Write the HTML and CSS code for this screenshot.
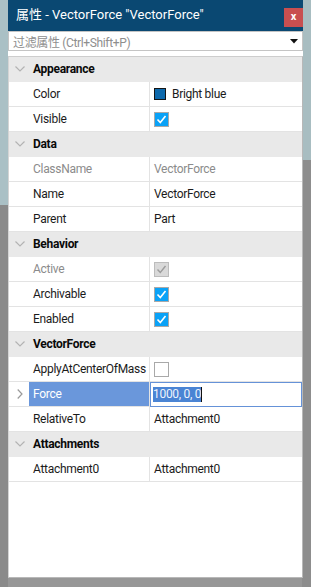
FILE: index.html
```html
<!DOCTYPE html>
<html>
<head>
<meta charset="utf-8">
<link rel="stylesheet" href="styles.css">
</head>
<body>
<div class="window">
  <div class="titlebar">
    <span class="title">属性 - VectorForce "VectorForce"</span>
    <span class="close">x</span>
  </div>
  <div class="filter">
    <span class="placeholder">过滤属性 (Ctrl+Shift+P)</span>
    <svg class="drop" width="8" height="5" viewBox="0 0 8 5"><path d="M0 0 H8 L4 4.5 Z" fill="#111"/></svg>
  </div>
  <div class="spacer"></div>
  <div class="grid">
    <div class="row head"><span class="exp"><svg width="10" height="6" viewBox="0 0 10 6"><path d="M0.5 0.5 L5 5 L9.5 0.5" fill="none" stroke="#b3b3b3" stroke-width="1.2"/></svg></span><span class="htext">Appearance</span></div>
    <div class="row"><div class="lab"><span class="exp"></span><span class="name">Color</span></div><div class="val"><span class="swatch"></span>Bright blue</div></div>
    <div class="row"><div class="lab"><span class="exp"></span><span class="name">Visible</span></div><div class="val"><span class="cb on"><svg width="13" height="13" viewBox="0 0 13 13"><path d="M2.5 6.5 L5.3 9.5 L10.5 3" fill="none" stroke="#fff" stroke-width="1.6"/></svg></span></div></div>

    <div class="row head"><span class="exp"><svg width="10" height="6" viewBox="0 0 10 6"><path d="M0.5 0.5 L5 5 L9.5 0.5" fill="none" stroke="#b3b3b3" stroke-width="1.2"/></svg></span><span class="htext">Data</span></div>
    <div class="row"><div class="lab"><span class="exp"></span><span class="name dis">ClassName</span></div><div class="val dis">VectorForce</div></div>
    <div class="row"><div class="lab"><span class="exp"></span><span class="name">Name</span></div><div class="val">VectorForce</div></div>
    <div class="row"><div class="lab"><span class="exp"></span><span class="name">Parent</span></div><div class="val">Part</div></div>

    <div class="row head"><span class="exp"><svg width="10" height="6" viewBox="0 0 10 6"><path d="M0.5 0.5 L5 5 L9.5 0.5" fill="none" stroke="#b3b3b3" stroke-width="1.2"/></svg></span><span class="htext">Behavior</span></div>
    <div class="row"><div class="lab"><span class="exp"></span><span class="name dis">Active</span></div><div class="val"><span class="cb disabled"><svg width="13" height="13" viewBox="0 0 13 13"><path d="M2.5 6.5 L5.3 9.5 L10.5 3" fill="none" stroke="#9c9c9c" stroke-width="1.4"/></svg></span></div></div>
    <div class="row"><div class="lab"><span class="exp"></span><span class="name">Archivable</span></div><div class="val"><span class="cb on"><svg width="13" height="13" viewBox="0 0 13 13"><path d="M2.5 6.5 L5.3 9.5 L10.5 3" fill="none" stroke="#fff" stroke-width="1.6"/></svg></span></div></div>
    <div class="row"><div class="lab"><span class="exp"></span><span class="name">Enabled</span></div><div class="val"><span class="cb on"><svg width="13" height="13" viewBox="0 0 13 13"><path d="M2.5 6.5 L5.3 9.5 L10.5 3" fill="none" stroke="#fff" stroke-width="1.6"/></svg></span></div></div>

    <div class="row head"><span class="exp"><svg width="10" height="6" viewBox="0 0 10 6"><path d="M0.5 0.5 L5 5 L9.5 0.5" fill="none" stroke="#b3b3b3" stroke-width="1.2"/></svg></span><span class="htext">VectorForce</span></div>
    <div class="row"><div class="lab"><span class="exp"></span><span class="name">ApplyAtCenterOfMass</span></div><div class="val"><span class="cb off"></span></div></div>
    <div class="row"><div class="lab"><span class="exp"><svg width="6" height="10" viewBox="0 0 6 10"><path d="M0.7 0.5 L5 5 L0.7 9.5" fill="none" stroke="#9a9a9a" stroke-width="1.2"/></svg></span><span class="name sel">Force</span></div><div class="val edit"><span class="seltext">1000, 0, 0</span><span class="caret"></span></div></div>
    <div class="row"><div class="lab"><span class="exp"></span><span class="name">RelativeTo</span></div><div class="val">Attachment0</div></div>

    <div class="row head"><span class="exp"><svg width="10" height="6" viewBox="0 0 10 6"><path d="M0.5 0.5 L5 5 L9.5 0.5" fill="none" stroke="#b3b3b3" stroke-width="1.2"/></svg></span><span class="htext">Attachments</span></div>
    <div class="row"><div class="lab"><span class="exp"></span><span class="name">Attachment0</span></div><div class="val">Attachment0</div></div>
  </div>
</div>
</body>
</html>
```

FILE: styles.css
```css
html, body {
  margin: 0;
  padding: 0;
}
body {
  width: 311px;
  height: 587px;
  overflow: hidden;
  font-family: Roboto, "Noto Sans CJK SC", sans-serif;
  font-size: 12px;
  letter-spacing: -0.3px;
  color: #1b1b1b;
  background:
    linear-gradient(#aac0c5 0, #aac0c5 205px, #8a8a8a 205px) left top / 8px 100% no-repeat,
    linear-gradient(#a8bdc1 0, #a8bdc1 160px, #8d8d8d 160px) right top / 9px 100% no-repeat,
    #979797;
}
.window {
  margin-left: 8px;
  width: 295px;
  height: 578px;
  background: #fff;
  display: flex;
  flex-direction: column;
}
.titlebar {
  height: 31px;
  flex: none;
  background: #0a4872;
  display: flex;
  justify-content: space-between;
  align-items: flex-start;
}
.title {
  color: #fff;
  font-size: 13px;
  letter-spacing: 0;
  padding-left: 8px;
  line-height: 30px;
}
.close {
  margin-top: 8px;
  width: 19px;
  height: 19px;
  background: #c84f50;
  color: #fff;
  font-weight: bold;
  font-size: 11px;
  line-height: 18px;
  text-align: center;
  letter-spacing: 0;
}
.filter {
  flex: none;
  height: 20px;
  box-sizing: border-box;
  border: 1px solid #c4c4c4;
  display: flex;
  align-items: center;
  justify-content: space-between;
  padding: 0 4px 0 4px;
}
.placeholder {
  color: #8e8e8e;
  font-size: 12px;
  letter-spacing: -0.35px;
}
.spacer {
  flex: none;
  height: 5px;
}
.grid {
  flex: 1;
  border-top: 1px solid #cdcdcd;
  border-left: 1px solid #d4d4d4;
  border-right: 1px solid #b8b8b8;
  border-bottom: 1px solid #b8b8b8;
  display: flex;
  flex-direction: column;
}
.row {
  height: 25px;
  box-sizing: border-box;
  border-bottom: 1px solid #e3e3e3;
  display: flex;
  align-items: stretch;
  flex: none;
}
.row.head {
  background: #e9e9e9;
  border-bottom-color: #e9e9e9;
  align-items: center;
}
.exp {
  width: 20px;
  flex: none;
  display: flex;
  align-items: center;
  justify-content: center;
  padding-left: 1px;
  box-sizing: border-box;
}
.htext {
  font-weight: bold;
  color: #0a0a0a;
  padding-left: 4px;
  line-height: 24px;
}
.lab {
  width: 141px;
  flex: none;
  box-sizing: border-box;
  border-right: 1px solid #e3e3e3;
  display: flex;
}
.name {
  flex: 1;
  padding-left: 4px;
  line-height: 24px;
  white-space: nowrap;
}
.name.dis, .val.dis {
  color: #8b8b8b;
}
.name.sel {
  background: #6a97db;
  color: #fff;
}
.val {
  flex: 1;
  display: flex;
  align-items: center;
  padding-left: 4px;
  line-height: 24px;
  white-space: nowrap;
}
.val.edit {
  border: 1px solid #6592d8;
  padding-left: 2px;
  margin-bottom: -1px;
  position: relative;
  z-index: 1;
}
.seltext {
  background: #4a84d4;
  color: #eef3fb;
  line-height: 15px;
}
.caret {
  width: 1px;
  height: 15px;
  background: #111;
}
.swatch {
  width: 12px;
  height: 12px;
  box-sizing: border-box;
  border: 1px solid #151515;
  background: #0d69ac;
  margin-right: 6px;
}
.cb {
  width: 15px;
  height: 15px;
  box-sizing: border-box;
  border: 1px solid #a9a9a9;
  display: flex;
  align-items: center;
  justify-content: center;
}
.cb.on {
  background: #0aa2f7;
}
.cb.disabled {
  background: #d9d9d9;
  border-color: #bcbcbc;
}
.cb.off {
  background: #fff;
}
```
